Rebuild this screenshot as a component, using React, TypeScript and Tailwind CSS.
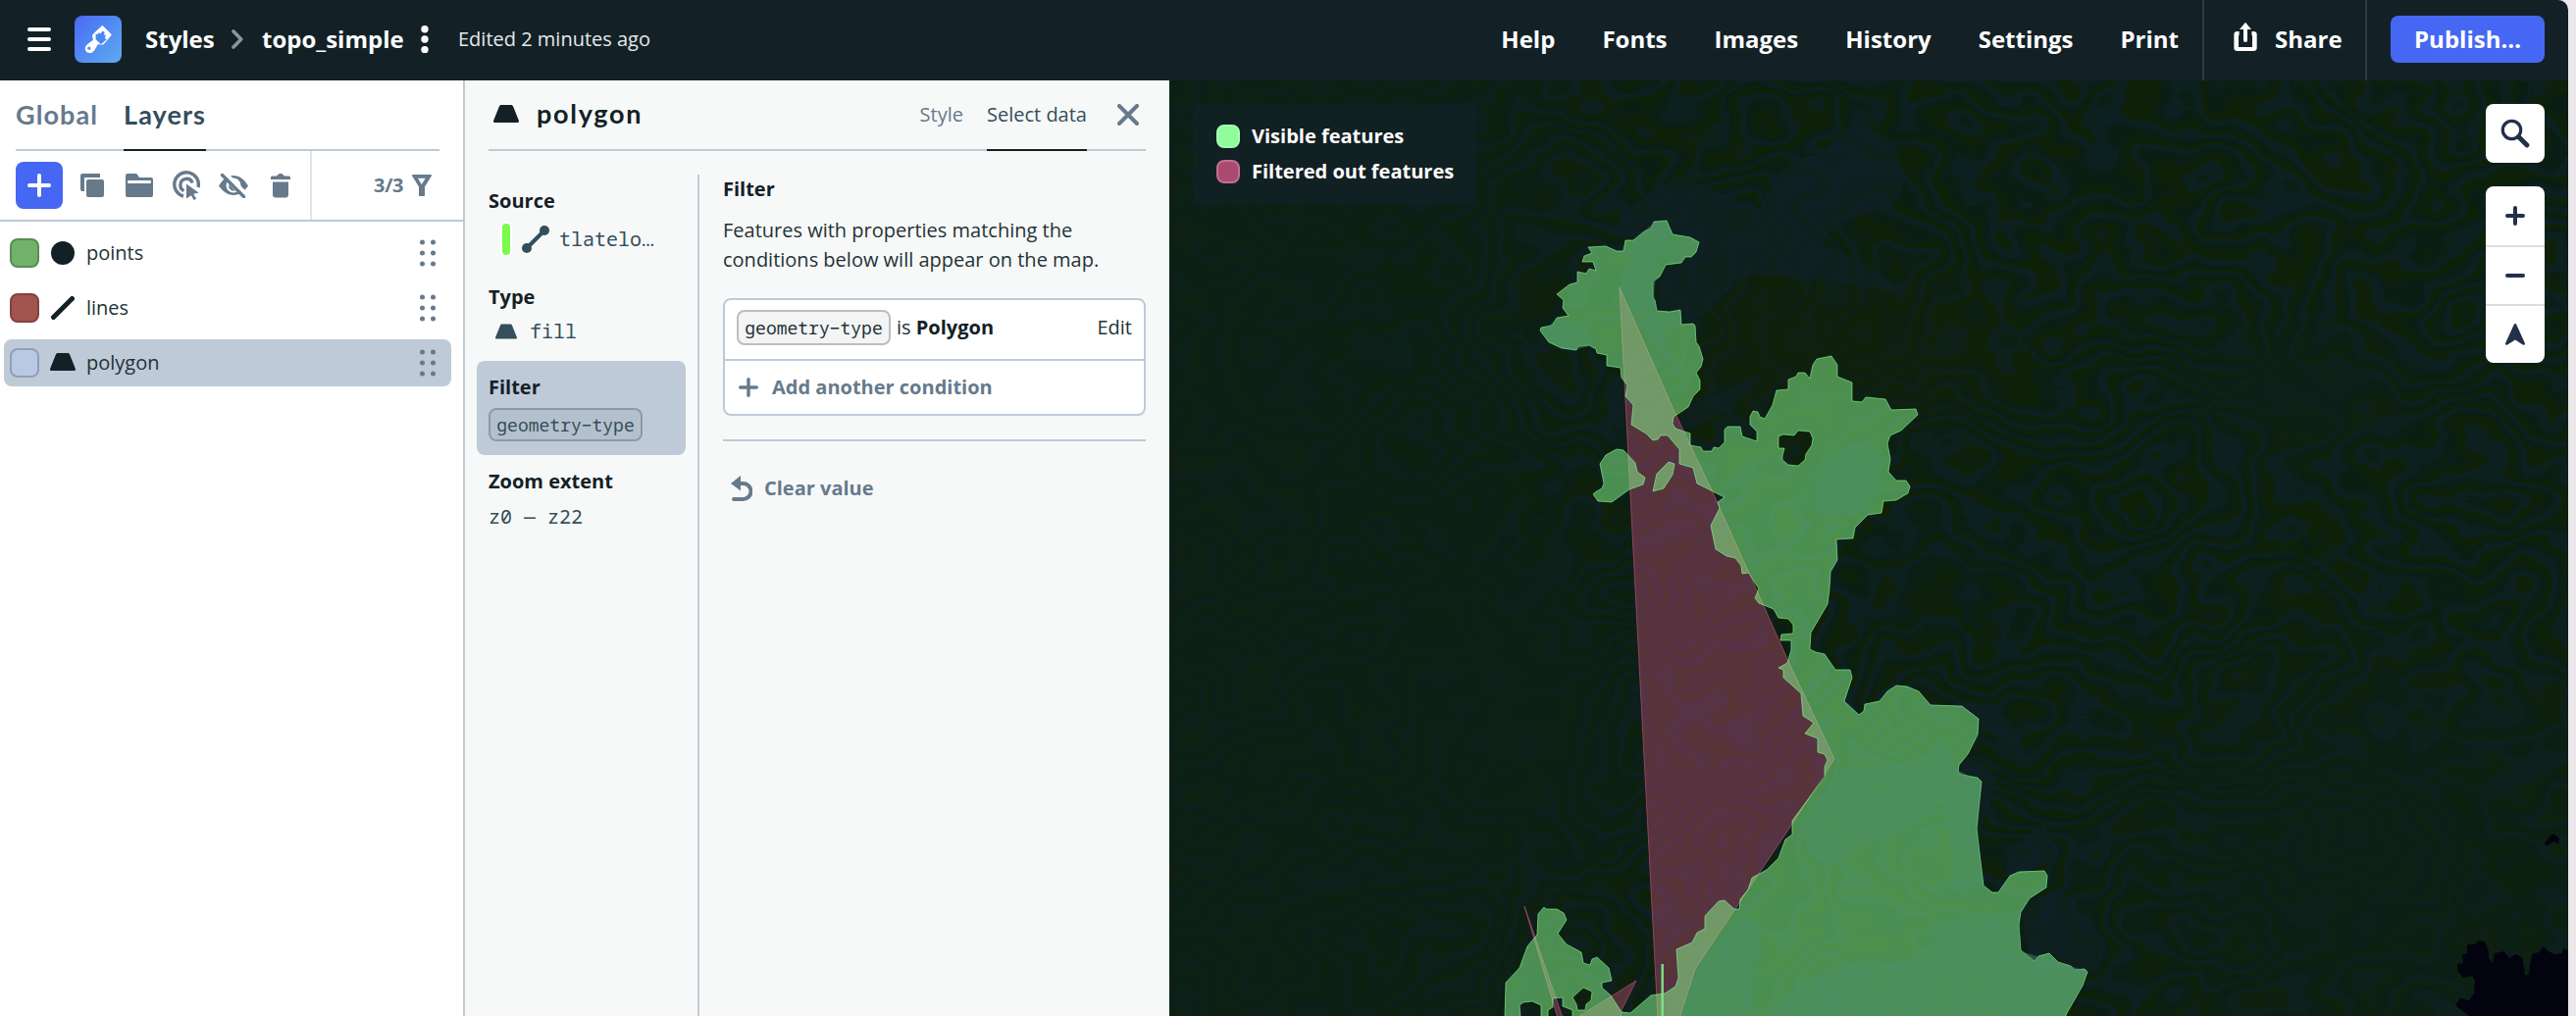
import React from "react";

const SANS = "font-['Open_Sans','Noto_Sans',sans-serif]";
const MONO = "font-['Noto_Sans_Mono','DejaVu_Sans_Mono',monospace]";
const TITLE = "font-['Lato','Open_Sans',sans-serif]";

function Trapezoid({ className }: { className?: string }) {
  return (
    <svg viewBox="0 0 26 18" className={className} fill="currentColor">
      <path d="M8.2 0h9.6c1.2 0 1.9.6 2.3 1.6l5.7 14.2c.5 1.3-.1 2.2-1.4 2.2H1.600c-1.300 0-1.900-.9-1.400-2.200L5.900 1.600C6.300.600 7 0 8.200 0z" />
    </svg>
  );
}

function Grip() {
  return (
    <svg viewBox="0 0 16 28" className="h-7 w-4 text-[#667a8c]" fill="currentColor">
      {[3, 14, 25].map((y) => (
        <React.Fragment key={y}>
          <circle cx="2.500" cy={y} r="2.500" />
          <circle cx="13.500" cy={y} r="2.500" />
        </React.Fragment>
      ))}
    </svg>
  );
}

function Plus({ className, size, stroke }: { className?: string; size: number; stroke: number }) {
  const m = size / 2;
  const e = stroke / 2;
  return (
    <svg viewBox={`0 0 ${size} ${size}`} width={size} height={size} className={className} stroke="currentColor" strokeWidth={stroke} strokeLinecap="round">
      <path d={`M${m} ${e}V${size - e}M${e} ${m}H${size - e}`} />
    </svg>
  );
}

function Header() {
  return (
    <header className="flex h-[82px] shrink-0 items-stretch bg-[#132126] text-2xl font-bold text-white">
      <div className="flex h-20 items-center pl-7">
        <svg viewBox="0 0 24 24" className="size-6" stroke="currentColor" strokeWidth="4" strokeLinecap="round">
          <path d="M2 2h20M2 12h20M2 22h20" />
        </svg>
        <div className="ml-6 flex size-12 items-center justify-center rounded-lg bg-linear-to-br from-[#4a68f4] to-[#5fabf0]">
          <svg viewBox="0 0 28 28" className="size-7">
            <path
              d="M17.600.6c.5-.5 1-.5 1.500 0l8.200 8.200c.500.500.500 1 0 1.500L20 18.700c-.8.900-2 1.200-3.200.9l-2.800-.6-3.900 6.400C8.300 28 5.200 28.600 2.700 27.200.6 26 .3 22.800 1.700 20.800c1.300-1.900 4.700-4 7.300-6L8.200 11.600c-.3-1.200 0-2.300.9-3.200z"
              fill="#fff"
            />
            <path d="M11.600 8.200l1.800 1 1.200-1.900 2.100 1 1.600-2.600 2.200.7-.3 3.700 1.900-.6-1.300 3.400 2 1-5 4.700c-.4.300-.8.400-1.300.2l-4.800-4.600c-.4-.4-.4-.8-.1-1.200z" fill="#4c86f4" />
            <circle cx="4.800" cy="23.200" r="1.600" fill="#4f8ff4" />
          </svg>
        </div>
        <span className="ml-6 w-[72px]">Styles</span>
        <svg viewBox="0 0 12 20" className="ml-4 h-5 w-3 text-[#8c9499]" fill="none" stroke="currentColor" strokeWidth="3.600" strokeLinecap="round" strokeLinejoin="round">
          <path d="M2 2l7.800 8L2 18" />
        </svg>
        <span className="ml-[19px] w-[144px] whitespace-nowrap">topo_simple</span>
        <svg viewBox="0 0 8 28" className="ml-[18px] h-7 w-2" fill="currentColor">
          <circle cx="4" cy="3.800" r="3.700" />
          <circle cx="4" cy="14" r="3.700" />
          <circle cx="4" cy="24.600" r="3.700" />
        </svg>
        <span className="ml-[30px] text-xl font-normal text-[#e6e9ea]">Edited 2 minutes ago</span>
      </div>
      <nav className="ml-auto flex h-20 items-center gap-12 pr-6">
        {["Help", "Fonts", "Images", "History", "Settings", "Print"].map((label) => (
          <span key={label}>{label}</span>
        ))}
      </nav>
      <div className="flex w-[168px] border-x-2 border-[#2d3a3f] pl-7">
        <div className="flex h-20 items-center">
          <svg viewBox="0 0 28 32" className="-mt-1 mr-4 h-8 w-7" fill="none">
            <path d="M8.500 12H7a1 1 0 0 0-1 1v14a1 1 0 0 0 1 1h14a1 1 0 0 0 1-1V13a1 1 0 0 0-1-1h-1.500" transform="translate(-2.300 0) scale(1.165 1)" stroke="currentColor" strokeWidth="4" />
            <path d="M14 7v12" stroke="currentColor" strokeWidth="4" strokeLinecap="round" />
            <path d="M14 .8l6 7.200H8z" fill="currentColor" />
          </svg>
          <span>Share</span>
        </div>
      </div>
      <div className="flex h-20 items-center px-6">
        <button className="flex h-12 w-[157px] items-center justify-center rounded-lg bg-[#4667f3]">Publish…</button>
      </div>
    </header>
  );
}

function Toolbar() {
  return (
    <div className="flex h-[72px] items-stretch border-b-2 border-[#becad7] text-[#667a8c]">
      <div className="flex w-[318px] items-start border-r-2 border-[#e4e4e6] pt-[11px] pl-4">
        <button className="flex size-12 items-center justify-center rounded-lg bg-[#4667f3] text-white">
          <Plus size={24} stroke={4} />
        </button>
        <div className="flex h-12 items-center">
          <svg viewBox="0 0 24 24" className="ml-[18px] size-6" fill="currentColor">
            <path d="M0 2a2 2 0 0 1 2-2h18v4H4v14H2a2 2 0 0 1-2-2z" />
            <rect x="6" y="6" width="18" height="18" rx="2" />
          </svg>
          <svg viewBox="0 0 28 24" className="ml-[22px] h-6 w-7" fill="currentColor">
            <path d="M0 2a2 2 0 0 1 2-2h8c1 0 1.500.4 2 1l2 3h12a2 2 0 0 1 2 2v1H0z" />
            <path d="M0 6h2.200v4h23.600V6H28v16a2 2 0 0 1-2 2H2a2 2 0 0 1-2-2z" />
          </svg>
          <svg viewBox="0 0 28 30" className="ml-5 h-[30px] w-7" fill="none" stroke="currentColor" strokeWidth="3.400">
            <path d="M11 26A12.300 12.300 0 1 1 26 17" />
            <path d="M11.500 20.500a6.300 6.300 0 0 1-3.600-6.500 6.300 6.300 0 0 1 12.200-1.500" />
            <path d="M14 13.500l12.500 9-5.300 1.200 3 5-2.600 1.300-2.700-4.800-4.900 3.300z" fill="currentColor" stroke="none" />
          </svg>
          <svg viewBox="0 0 30 26" className="ml-[19px] h-[26px] w-[30px]" fill="none">
            <path d="M0 13.500C4 7 9 3 15 3s11 4 15 10.500C26 19 21 23 15 23S4 19 0 13.500z" fill="currentColor" />
            <circle cx="15" cy="13" r="7.500" fill="#fff" />
            <path d="M12 8.500a5.500 5.500 0 0 1 7 7.500z" fill="currentColor" />
            <path d="M10.500 12a5 5 0 0 0 6 6.500z" fill="currentColor" />
            <path d="M6 0l22 22" stroke="#fff" strokeWidth="4" />
            <path d="M3.500 2.500l22 22" stroke="currentColor" strokeWidth="3.400" strokeLinecap="round" />
          </svg>
          <svg viewBox="0 0 20 25" className="ml-[23px] h-[25px] w-5" fill="currentColor">
            <path d="M6 2.500L8 .6C8.400.200 8.700 0 9.200 0h1.600c.500 0 .8.200 1.200.6L14 2.500h4.500A1.500 1.500 0 0 1 20 4v2H0V4a1.500 1.500 0 0 1 1.500-1.500z" />
            <path d="M2 8.500h16V21.500A3 3 0 0 1 15 24.500H5a3 3 0 0 1-3-3z" />
          </svg>
        </div>
      </div>
      <div className="flex h-[70px] flex-1 items-center pl-[63px] text-xl font-bold">
        <span className="w-[33px] tracking-[-0.3px]">3/3</span>
        <svg viewBox="0 0 20 22" className="ml-1.5 h-[22px] w-5" fill="currentColor" fillRule="evenodd">
          <path d="M1 0h18c.8 0 1.200.8.800 1.600L13 12.500V21c0 .700-.4 1-1 1H8c-.600 0-1-.3-1-1v-8.500L.200 1.600C-.200.800.200 0 1 0zm5 3.800L9.800 10l3.900-6.200z" />
        </svg>
      </div>
    </div>
  );
}

function LayersPanel() {
  const rows = [
    { name: "points", swatch: "bg-[#71b26b] border-[#568e52]", icon: <circle cx="12" cy="12" r="12" fill="#132126" />, on: false },
    { name: "lines", swatch: "bg-[#a2544f] border-[#82423f]", icon: <path d="M2.500 21.500l19-19" stroke="#132126" strokeWidth="5" strokeLinecap="round" />, on: false },
    { name: "polygon", swatch: "bg-[#b9c8e3] border-[#909fb8]", icon: null, on: true },
  ];
  return (
    <aside className="w-[474px] shrink-0 border-r-2 border-[#becad7] bg-white">
      <div className="h-[72px] pr-6 pl-4">
        <div className={`${TITLE} flex h-[72px] gap-[25px] border-b-2 border-[#becad7] text-[27px] font-bold tracking-[1.1px]`}>
          <span className="w-[85px] pt-[15px] text-[#667a8c]">Global</span>
          <span className="-mb-0.5 w-[84px] border-b-2 border-[#132126] pt-[15px] text-[#344e5c]">Layers</span>
        </div>
      </div>
      <Toolbar />
      <ul className="flex flex-col gap-2 pt-2 pr-3 pl-1">
        {rows.map((r) => (
          <li key={r.name} className={`flex h-12 items-center rounded-lg pr-4 pl-1.5 ${r.on ? "bg-[#becad7]" : ""}`}>
            <span className={`size-[30px] rounded-lg border-2 ${r.swatch}`} />
            {r.icon ? (
              <svg viewBox="0 0 24 24" className="ml-3 size-6">{r.icon}</svg>
            ) : (
              <Trapezoid className="-mt-0.5 mr-[-1px] ml-[11px] h-[18px] w-[26px] text-[#132126]" />
            )}
            <span className="ml-3 flex-1 text-xl text-[#233237]">{r.name}</span>
            <Grip />
          </li>
        ))}
      </ul>
    </aside>
  );
}

function PropertyList() {
  return (
    <div className="w-[213px] shrink-0 text-xl font-bold text-[#132126]">
      <div className="flex h-[98px] flex-col px-3 pt-[12px]">
        <span className="leading-[30px]">Source</span>
        <span className={`${MONO} mt-[9px] flex h-[30px] items-center font-normal text-[#344e5c]`}>
          <span className="ml-3 h-9 w-3 rounded-md border-2 border-white bg-[#79fb4b]" />
          <svg viewBox="0 0 28 28" className="ml-2.5 size-7" fill="currentColor">
            <path d="M5 23L23 5" stroke="currentColor" strokeWidth="4" />
            <circle cx="5" cy="23" r="5" />
            <circle cx="23" cy="5" r="5" />
          </svg>
          <span className="ml-2.5">
            tlatelo<span className={`${SANS} text-base font-semibold`}>…</span>
          </span>
        </span>
      </div>
      <div className="flex h-[92px] flex-col px-3 pt-[12px]">
        <span className="leading-[30px]">Type</span>
        <span className={`${MONO} mt-[5px] flex h-[30px] items-center font-normal text-[#344e5c]`}>
          <Trapezoid className="ml-[7px] h-4 w-[22px]" />
          <span className="ml-[13px]">fill</span>
        </span>
      </div>
      <div className="flex h-24 flex-col items-start rounded-lg bg-[#becad7] px-3 pt-3">
        <span className="leading-[30px]">Filter</span>
        <span className={`${MONO} mt-1.5 flex h-[34px] w-[157px] items-center justify-center rounded-lg border-2 border-[#8d99a4] bg-[#b4c0cb] text-lg font-normal text-[#344e5c]`}>
          geometry−type
        </span>
      </div>
      <div className="flex flex-col px-3 pt-[12px]">
        <span className="leading-[30px]">Zoom extent</span>
        <span className={`${MONO} mt-1.5 leading-[30px] font-normal text-[#344e5c]`}>z0 — z22</span>
      </div>
    </div>
  );
}

function StylePanel() {
  return (
    <section className="flex w-[718px] shrink-0 flex-col bg-[#f7f9f8] pr-6 pl-3">
      <div className="ml-3 flex h-[72px] shrink-0 border-b-2 border-[#becad7] text-xl text-[#667a8c]">
        <Trapezoid className="mt-[25px] ml-[5px] h-[18px] w-[26px] text-[#132126]" />
        <span className={`${TITLE} mt-[16px] ml-[18px] text-[27px] leading-9 font-bold tracking-[1.7px] text-[#132126]`}>polygon</span>
        <span className="ml-auto pt-[21px]">Style</span>
        <span className="-mb-0.5 ml-6 w-[102px] border-b-2 border-[#132126] pt-[21px] whitespace-nowrap text-[#344e5c]">Select data</span>
        <svg viewBox="0 0 22 22" className="mt-6 mr-[7px] ml-[31px] size-[22px]" stroke="currentColor" strokeWidth="4" strokeLinecap="round">
          <path d="M2 2l18 18M20 2L2 20" />
        </svg>
      </div>
      <div className="flex flex-1 pt-6">
        <PropertyList />
        <div className="ml-3 flex-1 border-l-2 border-[#becad7] pl-6 text-xl text-[#233237]">
          <h2 className="leading-[30px] font-bold text-[#132126]">Filter</h2>
          <p className="mt-3 leading-[30px]">
            Features with properties matching the
            <br />
            conditions below will appear on the map.
          </p>
          <div className="mt-6 rounded-lg border-2 border-[#becad7] bg-white">
            <div className="flex h-[62px] items-center border-b-2 border-[#becad7] px-3 pb-1">
              <span className={`${MONO} flex h-9 w-[157px] items-center justify-center rounded-lg border-2 border-[#bcbdc0] bg-[#f3f4f4] text-lg`}>geometry−type</span>
              <span className="ml-1.5">
                is <b className="text-[#132126]">Polygon</b>
              </span>
              <span className="ml-auto">Edit</span>
            </div>
            <div className="flex h-[54px] items-center px-3.5 font-bold text-[#667a8c]">
              <Plus size={20} stroke={3.4} />
              <span className="ml-3.5">Add another condition</span>
            </div>
          </div>
          <div className="mt-6 border-b-2 border-[#becad7]" />
          <div className="mt-[34px] flex items-center pl-2 font-bold text-[#667a8c]">
            <svg viewBox="0 0 22 26" className="h-[26px] w-[22px]" fill="none">
              <path d="M9 8h3.500a7.800 7.800 0 0 1 0 16H3" stroke="currentColor" strokeWidth="4" strokeLinecap="round" />
              <path d="M10 0v15.500L0 8z" fill="currentColor" />
            </svg>
            <span className="ml-3">Clear value</span>
          </div>
        </div>
      </div>
    </section>
  );
}

const VISIBLE_AREA =
  "M1683 233L1686 226 1699 225 1705 239 1723 242 1732 247 1729 257 1724 262 1718 262 1714 268 1698 270 1692 282 1685 287 1685 304 1687 306 1689 317 1702 318 1713 316 1714 331 1726 330 1728 332 1729 349 1732 353 1736 366 1734 374 1729 380 1733 388 1733 397 1726 404 1721 415 1706 425 1705 432 1708 437 1723 442 1723 454 1734 456 1736 460 1745 460 1747 456 1752 457 1758 451 1758 438 1761 435 1774 435 1776 445 1791 450 1791 440 1784 433 1784 425 1787 419 1792 420 1794 425 1799 427 1807 413 1811 398 1823 397 1823 387 1831 384 1833 380 1840 380 1845 386 1848 372 1852 366 1867 363 1873 372 1873 384 1888 390 1888 409 1898 410 1902 405 1922 407 1928 418 1953 417 1955 423 1938 439 1927 444 1924 452 1927 468 1925 481 1933 490 1943 490 1947 496 1945 503 1933 510 1920 511 1918 523 1904 525 1891 538 1889 549 1872 550 1873 571 1866 583 1865 600 1863 616 1846 645 1845 662 1851 665 1860 667 1871 683 1886 683 1888 691 1880 715 1895 729 1900 725 1901 718 1916 715 1924 705 1933 699 1944 700 1956 705 1968 719 2000 720 2017 733 2016 749 2006 769 1997 780 1996 787 2000 790 2016 793 2020 797 2015 845 2022 903 2031 910 2037 910 2049 893 2058 889 2084 888 2087 893 2086 905 2069 916 2060 930 2058 943 2060 969 2074 980 2078 975 2089 972 2098 981 2111 985 2115 989 2125 988 2128 991 2123 1005 2107 1033 2105 1038 1534 1038 1535 1002 1549 987 1557 965 1567 953 1568 932 1574 925 1576 927 1587 927 1594 931 1597 938 1588 952 1597 963 1612 971 1614 982 1621 984 1623 978 1628 976 1640 987 1643 1000 1633 1002 1633 1007 1642 1015 1653 1032 1662 1033 1683 1015 1697 1013 1708 1006 1711 997 1709 968 1725 961 1730 951 1738 947 1738 934 1752 919 1758 918 1768 927 1773 927 1774 917 1782 907 1786 895 1801 887 1813 875 1820 856 1827 851 1827 837 1860 792 1860 782 1863 775 1860 769 1853 767 1853 753 1840 748 1849 737 1838 730 1836 707 1818 691 1818 683 1813 681 1822 676 1826 663 1826 653 1815 653 1816 647 1828 646 1828 637 1823 631 1813 630 1808 621 1793 615 1789 610 1793 600 1788 593 1783 584 1776 585 1775 577 1769 569 1760 567 1749 560 1744 536 1753 518 1751 512 1758 507 1730 493 1726 477 1712 473 1712 458 1700 444 1693 444 1690 448 1685 449 1678 442 1663 433 1665 413 1657 404 1659 393 1653 385 1652 375 1638 373 1638 362 1628 360 1627 356 1620 352 1609 353 1607 357 1592 355 1579 349 1570 337 1571 334 1582 332 1587 324 1599 322 1593 314 1594 306 1587 300 1600 290 1608 288 1608 277 1617 279 1620 274 1627 276 1624 267 1613 267 1615 261 1623 258 1619 252 1637 251 1648 256 1655 256 1657 245 1665 245 1676 236Z" +
  "M1813 445L1818 443 1829 444 1833 439 1845 440 1848 447 1847 454 1841 463 1840 469 1833 475 1823 474 1817 469 1817 465 1819 457 1813 457Z" +
  "M1648 458L1655 459 1667 472 1669 481 1677 487 1675 494 1661 499 1643 512 1629 511 1624 504 1626 502 1633 498 1635 493 1631 473 1637 464Z" +
  "M1701 471L1707 473 1705 484 1696 498 1685 501 1689 483Z" +
  "M1549 1025L1553 1022 1562 1021 1571 1025 1571 1038 1550 1038Z" +
  "M1583 1018L1593 1017 1593 1026 1603 1030 1603 1038 1578 1038 1578 1030 1583 1027Z" +
  "M1614 1007L1623 1011 1622 1020 1617 1024 1616 1030 1608 1030 1607 1024 1603 1017Z";

const FILTERED_AREA =
  "M1651 293L1707 420 1745 500 1790 600 1822 672 1870 774 1827 840 1728 988 1712 1038 1690 1038 1667 600Z" +
  "M1554 924L1593 1038 1588 1038Z" +
  "M1668 1000L1653 1030 1652 1038 1607 1038Z";

const LOWLANDS = [
  "M1640 235C1665 205 1690 190 1710 180C1735 185 1770 205 1795 213C1805 180 1830 155 1860 158C1875 120 1900 125 1925 140C1945 165 1945 200 1925 215C1880 220 1860 235 1858 250C1900 265 1930 285 1940 300C1890 290 1850 285 1780 280C1760 300 1730 330 1710 335C1680 330 1690 290 1700 260Z",
  "M1730 405C1760 405 1780 385 1795 380C1790 400 1765 420 1740 430L1700 445Z",
  "M1640 410C1655 405 1660 425 1655 440C1640 430 1635 420 1640 410Z",
  "M1985 720C2030 705 2060 740 2065 775C2040 770 2030 740 2010 730Z",
  "M1998 778C2025 770 2040 790 2030 815L2018 850Z",
  "M2060 925C2100 895 2125 915 2120 945C2150 965 2150 980 2125 992L2070 985Z",
  "M2050 870C2060 855 2080 845 2085 838C2085 860 2105 860 2098 870C2080 890 2060 885 2040 905Z",
];

// Elevation bands: repeating tones that read as contour lines once the noise is quantised.
const BANDS = Array.from({ length: 42 }, (_, i) => [
  [0.045, 0.12, 0.08],
  [0.065, 0.13, 0.035],
  [0.055, 0.13, 0.14],
][i % 3]);
const band = (channel: number) => BANDS.map((c) => c[channel]).join(" ");

function MapCanvas() {
  return (
    <svg viewBox="1192 82 1426 954" preserveAspectRatio="none" className="absolute inset-0 h-full w-full">
      <defs>
        <filter id="terrain" x="0" y="0" width="100%" height="100%" colorInterpolationFilters="sRGB">
          <feTurbulence type="fractalNoise" baseFrequency="0.004 0.005" numOctaves="4" seed="11" />
          <feColorMatrix values="1 0 0 0 0 1 0 0 0 0 1 0 0 0 0 0 0 0 0 1" />
          <feComponentTransfer>
            <feFuncR type="discrete" tableValues={band(0)} />
            <feFuncG type="discrete" tableValues={band(1)} />
            <feFuncB type="discrete" tableValues={band(2)} />
          </feComponentTransfer>
          <feGaussianBlur stdDeviation="0.7" />
        </filter>
        <linearGradient id="west" x1="0" x2="1" y1="0" y2="0">
          <stop offset="0" stopColor="#0c2016" stopOpacity="0.7" />
          <stop offset="0.6" stopColor="#0c2016" stopOpacity="0.5" />
          <stop offset="1" stopColor="#0c2016" stopOpacity="0" />
        </linearGradient>
        <radialGradient id="ridge">
          <stop offset="0" stopColor="#10200a" stopOpacity="0.75" />
          <stop offset="1" stopColor="#10200a" stopOpacity="0" />
        </radialGradient>
        <radialGradient id="plain">
          <stop offset="0" stopColor="#0c2017" stopOpacity="0.8" />
          <stop offset="1" stopColor="#0c2017" stopOpacity="0" />
        </radialGradient>
      </defs>
      <rect x="1192" y="82" width="1426" height="954" fill="#0d2015" />
      <rect x="1192" y="82" width="1426" height="954" filter="url(#terrain)" opacity="0.85" />
      <rect x="1192" y="82" width="500" height="954" fill="url(#west)" />
      <ellipse cx="1860" cy="360" rx="260" ry="140" fill="url(#ridge)" />
      <ellipse cx="1540" cy="720" rx="180" ry="240" fill="url(#plain)" />
      <ellipse cx="2340" cy="400" rx="150" ry="90" fill="url(#plain)" />
      <ellipse cx="2420" cy="880" rx="340" ry="260" fill="url(#plain)" />
      <g fill="#0f2125" opacity="0.65">
        {LOWLANDS.map((d) => (
          <path key={d} d={d} />
        ))}
      </g>
      <g fill="none" stroke="#0d2021" strokeWidth="1.500" opacity="0.8">
        {[14, 24, 34, 45, 56, 68, 80].map((r) => (
          <path key={r} d={`M${1985 - r} ${590}q${r * 0.1} ${-r * 0.9} ${r} ${-r * 0.85}t${r} ${r * 0.8}q${-r * 0.2} ${r * 0.9} ${-r} ${r * 0.9}t${-r} ${-r * 0.85}z`} />
        ))}
      </g>
      <path d={FILTERED_AREA} fill="#a2486a" fillOpacity="0.5" stroke="#a2486a" strokeOpacity="0.85" />
      <path d={VISIBLE_AREA} fill="#8cfe90" fillOpacity="0.5" fillRule="evenodd" stroke="#8cfe9c" strokeOpacity="0.6" />
      <g fill="#4c9068" opacity="0.45">
        <path d="M1686 227L1699 226 1703 240 1690 262 1686 300 1695 340 1720 390 1700 372 1680 345 1652 292 1664 246Z" />
        <path d="M1572 337L1588 325 1610 330 1624 352 1607 356 1590 354Z" />
        <path d="M1850 500C1855 460 1890 445 1915 455C1930 500 1900 530 1870 525C1850 530 1845 515 1850 500Z" />
        <path d="M1870 790C1900 770 1940 790 1960 775C1980 740 1990 770 1995 785L2019 797 2016 845 2021 903 1990 910C1985 850 1990 820 1975 820C1940 870 1900 850 1890 870C1860 890 1840 880 1838 840Z" />
        <path d="M1775 930L1797 940 1785 1036 1715 1036 1730 988ZM1800 1036C1840 990 1890 975 1900 985C1960 985 1975 960 1970 940L2058 930 2060 970 2127 990 2105 1036Z" />
      </g>
      <path d="M1694.700 983V1036" stroke="#7be388" strokeWidth="2.400" />
      <path
        fill="#03030f"
        d="M2526 959L2533 960 2537 970 2537 977 2541 982 2543 972 2552 970 2558 977 2565 973 2571 976 2573 987 2574 995 2578 993 2581 973 2588 971 2593 965 2597 970 2605 973 2612 972 2613 967 2618 969 2618 1036 2517 1036 2503 1025 2508 1018 2517 1020 2522 1013 2523 1000 2520 995 2511 997 2505 990 2505 983 2511 982 2510 973 2515 972 2515 963 2523 963ZM2593 861L2597 856 2600 852 2603 850 2609 855 2608 861 2604 858 2597 862Z"
      />
    </svg>
  );
}

function MapView() {
  return (
    <main className="relative flex-1 overflow-hidden bg-[#0d2015]">
      <MapCanvas />
      <div className="absolute top-6 left-6 flex h-[102px] w-72 flex-col gap-3 rounded-lg bg-[#132126]/80 px-6 pt-[21px] text-xl leading-6 font-bold whitespace-nowrap text-white">
        <div className="flex h-6 items-center">
          <span className="mr-3 size-6 shrink-0 rounded-lg border-2 border-[#a5fdb0] bg-[#8efd9a]" />
          Visible features
        </div>
        <div className="flex h-6 items-center">
          <span className="mr-3 size-6 shrink-0 rounded-lg border-2 border-[#c07090] bg-[#a94a6e]" />
          Filtered out features
        </div>
      </div>
      <div className="absolute top-6 right-6 flex flex-col gap-6 text-[#22304a]">
        <button className="flex size-[60px] items-center justify-center rounded-lg bg-white">
          <svg viewBox="0 0 30 30" className="size-[30px]" fill="none" stroke="currentColor" strokeLinecap="round">
            <circle cx="11.500" cy="11.500" r="9.200" strokeWidth="3.200" />
            <path d="M18.500 18.500l8.500 8.500" strokeWidth="4.800" />
          </svg>
        </button>
        <div className="h-[180px] w-[60px] overflow-hidden rounded-lg bg-white">
          <div className="flex h-[60px] items-center justify-center">
            <Plus size={20} stroke={4} />
          </div>
          <div className="flex h-[62px] items-center justify-center border-y-2 border-[#dddddd]">
            <svg viewBox="0 0 20 4" className="h-1 w-5" fill="currentColor">
              <rect width="20" height="4" rx="2" />
            </svg>
          </div>
          <div className="flex h-[58px] items-center justify-center">
            <svg viewBox="0 0 20 22" className="h-[22px] w-5" fill="currentColor">
              <path d="M8.600 1.200C9.100-.300 10.900-.300 11.400 1.200l8.400 18.600c.5 1.500-.6 2.500-2 1.800L10 16.500l-7.800 5.100c-1.400.7-2.500-.3-2-1.800z" />
            </svg>
          </div>
        </div>
      </div>
    </main>
  );
}

export default function App() {
  return (
    <div className={`${SANS} h-[1036px] w-[2626px] overflow-hidden bg-[#ebe7ea] pr-2`}>
      <div className="flex h-full flex-col overflow-hidden rounded-tr-[10px]">
        <Header />
        <div className="flex min-h-0 flex-1">
          <LayersPanel />
          <StylePanel />
          <MapView />
        </div>
      </div>
    </div>
  );
}
